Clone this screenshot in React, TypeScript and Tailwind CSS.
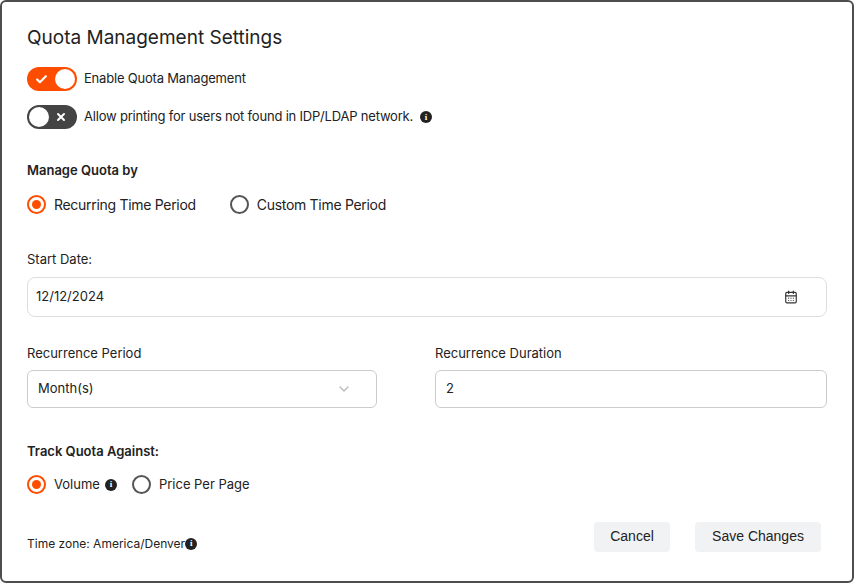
import React from 'react';
import { Check, X, CalendarDays, ChevronDown } from 'lucide-react';

const font = { fontFamily: 'Inter, "Liberation Sans", sans-serif' };

const InfoDot = () => (
  <span className="inline-flex h-[12px] w-[12px] items-center justify-center rounded-full bg-[#222] text-white text-[9px] font-bold leading-none" style={{ fontFamily: 'serif' }}>i</span>
);

const Radio = ({ on }: { on: boolean }) => (
  <span className={`flex h-[19px] w-[19px] items-center justify-center rounded-full border-2 ${on ? 'border-[#ff4d00]' : 'border-[#555]'}`}>
    {on && <span className="h-[9px] w-[9px] rounded-full bg-[#ff4d00]" />}
  </span>
);

export default function App() {
  return (
    <div className="h-[583px] w-[854px] bg-white" style={font}>
      <div className="flex h-full flex-col rounded-md border-2 border-[#4d4d4d] px-[25px] text-[#222]">
        <h1 className="mt-[22px] text-[19px] leading-[28px]">Quota Management Settings</h1>

        <div className="mt-[15px] flex items-center gap-[7px]">
          <span className="flex h-[24px] w-[50px] items-center justify-between rounded-full bg-[#ff4d00] px-[2px]">
            <Check size={13} strokeWidth={4} className="ml-[6px] text-white" />
            <span className="h-[20px] w-[20px] rounded-full bg-white" />
          </span>
          <span className="text-[13px] tracking-[-0.2px]">Enable Quota Management</span>
        </div>

        <div className="mt-[14px] flex items-center gap-[7px]">
          <span className="flex h-[24px] w-[50px] items-center justify-between rounded-full bg-[#444] px-[2px]">
            <span className="h-[20px] w-[20px] rounded-full bg-white" />
            <X size={12} strokeWidth={4} className="mr-[8px] text-white" />
          </span>
          <span className="text-[13px] tracking-[-0.2px]">Allow printing for users not found in IDP/LDAP network.</span>
          <InfoDot />
        </div>

        <div className="mt-[32px] text-[13px] font-semibold">Manage Quota by</div>
        <div className="mt-[13px] flex items-center text-[14px] tracking-[-0.3px]">
          <Radio on />
          <span className="ml-[8px]">Recurring Time Period</span>
          <span className="ml-[34px]"><Radio on={false} /></span>
          <span className="ml-[8px]">Custom Time Period</span>
        </div>

        <div className="mt-[35px] text-[13px]">Start Date:</div>
        <div className="mt-[8px] flex h-[40px] items-center justify-between rounded-lg border border-[#ddd] pl-[8px] pr-[28px] text-[13px]">
          <span>12/12/2024</span>
          <CalendarDays size={14} className="text-[#333]" />
        </div>

        <div className="mt-[27px] flex text-[13px]">
          <div className="w-[350px]">
            <div>Recurrence Period</div>
            <div className="mt-[6px] flex h-[38px] items-center justify-between rounded-md border border-[#ccc] pl-[10px] pr-[24px]">
              <span>Month(s)</span>
              <ChevronDown size={16} className="text-[#bbb]" />
            </div>
          </div>
          <div className="ml-[58px] flex-1">
            <div>Recurrence Duration</div>
            <div className="mt-[6px] flex h-[38px] items-center rounded-md border border-[#ccc] px-[10px]">2</div>
          </div>
        </div>

        <div className="mt-[34px] text-[13px] font-semibold">Track Quota Against:</div>
        <div className="mt-[14px] flex items-center gap-[5px] text-[13px]">
          <Radio on />
          <span className="ml-[3px]">Volume</span>
          <InfoDot />
          <span className="ml-[10px]"><Radio on={false} /></span>
          <span className="ml-[3px]">Price Per Page</span>
        </div>

        <div className="mt-[26px] flex items-center justify-between pr-[6px]">
          <div className="mt-[14px] flex items-center text-[12px]">Time zone: America/Denver<InfoDot /></div>
          <div className="flex gap-[25px] text-[14px]" style={{ fontFamily: '"Liberation Sans", Arial, sans-serif' }}>
            <button className="h-[30px] w-[76px] rounded bg-[#f1f2f4]">Cancel</button>
            <button className="h-[30px] w-[126px] rounded bg-[#f1f2f4]">Save Changes</button>
          </div>
        </div>
      </div>
    </div>
  );
}
